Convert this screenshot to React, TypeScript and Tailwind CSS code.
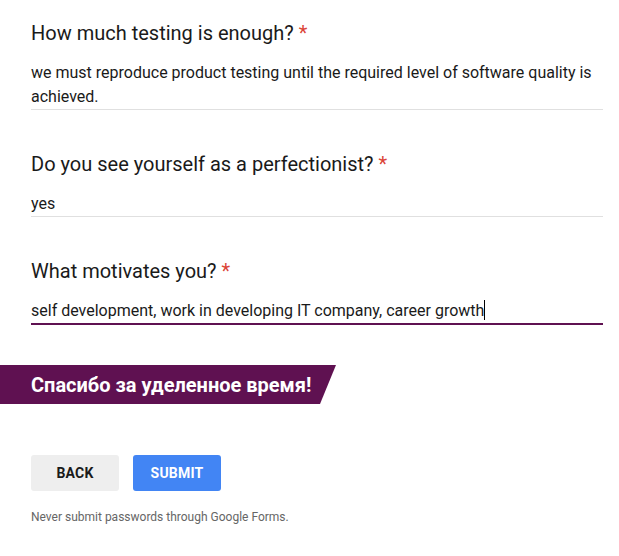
import React from "react";

function Question({ title, children, active }: { title: string; children: React.ReactNode; active?: boolean }) {
  return (
    <div>
      <div className="text-[20px] leading-[24px] text-[#1a1a1a]">
        {title} <span className="text-[#db4437]">*</span>
      </div>
      <div
        className={
          "mt-[16px] text-[16px] leading-[24px] text-[#1a1a1a] " +
          (active ? "border-b-2 border-[#5f1151]" : "border-b border-[#e0e0e0]")
        }
      >
        {children}
      </div>
    </div>
  );
}

export default function App() {
  return (
    <div
      className="w-[619px] h-[556px] bg-white overflow-hidden"
      style={{ fontFamily: "Roboto, 'Liberation Sans', sans-serif" }}
    >
      <div className="pt-[21px] pl-[31px] pr-[16px] flex flex-col gap-[42px]">
        <Question title="How much testing is enough?">
          we must reproduce product testing until the required level of software quality is achieved.
        </Question>
        <Question title="Do you see yourself as a perfectionist?">yes</Question>
        <Question title="What motivates you?" active>
          self development, work in developing IT company, career growth
          <span className="inline-block w-px h-[20px] bg-black align-[-4px]" />
        </Question>
      </div>
      <div
        className="mt-[40px] w-[336px] h-[39px] bg-[#5f1151] flex items-center pl-[31px] text-white font-bold text-[20px]"
        style={{ clipPath: "polygon(0 0, 336px 0, 320px 39px, 0 39px)" }}
      >
        Спасибо за уделенное время!
      </div>
      <div className="mt-[51px] pl-[31px] flex gap-[14px]">
        <button className="w-[88px] h-[36px] rounded-[3px] bg-[#eeeeee] text-[14px] font-bold text-[#1a1a1a] tracking-[0.2px]">
          BACK
        </button>
        <button className="w-[88px] h-[36px] rounded-[3px] bg-[#4285f4] text-[14px] font-bold text-white tracking-[0.2px]">
          SUBMIT
        </button>
      </div>
      <div className="mt-[18px] pl-[31px] text-[12px] leading-[16px] text-[#666666]">
        Never submit passwords through Google Forms.
      </div>
    </div>
  );
}
